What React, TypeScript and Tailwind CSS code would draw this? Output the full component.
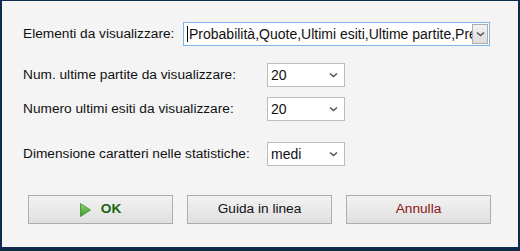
import React from 'react';

const Chevron = () => (
  <svg width="9" height="6" viewBox="0 0 9 6" className="text-[#555]">
    <path d="M1 1.5 L4.5 4.5 L8 1.5" fill="none" stroke="currentColor" strokeWidth="1.6" />
  </svg>
);

const SmallSelect: React.FC<{ value: string }> = ({ value }) => (
  <div className="flex h-[24px] w-[78px] items-center justify-between border border-[#bdbdbd] bg-white pl-[3px] pr-[6px] text-[14px]">
    <span>{value}</span>
    <Chevron />
  </div>
);

const Row: React.FC<{ label: string; children: React.ReactNode }> = ({ label, children }) => (
  <div className="flex items-center">
    <div className="w-[244px]">{label}</div>
    {children}
  </div>
);

export default function App() {
  return (
    <div
      className="h-[251px] w-[520px] overflow-hidden border-x-[2px] border-t-[1px] border-b-[4px] border-[#0c2d4a] bg-[#f4f4f4] text-[13.7px] text-[#111]"
      style={{ fontFamily: '"Liberation Sans", Arial, sans-serif' }}
    >
      <div className="flex flex-col pl-[21px] pt-[21px]">
        <div className="flex items-center">
          <div className="w-[160px]">Elementi da visualizzare:</div>
          <div className="flex h-[24px] w-[307px] items-center border border-[#7eb4ea] bg-white pl-[3px] pr-[1px]">
            <span className="mr-[1px] h-[16px] w-[1px] bg-black" />
            <span className="min-w-0 flex-1 overflow-hidden whitespace-nowrap text-[14px]">
              Probabilità,Quote,Ultimi esiti,Ultime partite,Pre
            </span>
            <div className="flex h-[20px] w-[16px] items-center justify-center border border-[#acacac] bg-gradient-to-b from-[#f2f2f2] to-[#dcdcdc]">
              <Chevron />
            </div>
          </div>
        </div>

        <div className="mt-[17px] flex flex-col gap-[10px]">
          <Row label="Num. ultime partite da visualizzare:">
            <SmallSelect value="20" />
          </Row>
          <Row label="Numero ultimi esiti da visualizzare:">
            <SmallSelect value="20" />
          </Row>
        </div>

        <div className="mt-[21px]">
          <Row label="Dimensione caratteri nelle statistiche:">
            <SmallSelect value="medi" />
          </Row>
        </div>

        <div className="mt-[29px] flex gap-[14px] pl-[5px]">
          <button className="flex h-[29px] w-[145px] items-center justify-center gap-[10px] border border-[#adadad] bg-gradient-to-b from-[#f2f2f2] to-[#e0e0e0] font-bold text-[#17650f]">
            <svg width="11" height="14" viewBox="0 0 11 14">
              <defs>
                <linearGradient id="g" x1="0" y1="0" x2="0" y2="1">
                  <stop offset="0" stopColor="#8fd66f" />
                  <stop offset="1" stopColor="#3a9a2a" />
                </linearGradient>
              </defs>
              <path d="M0.5 0.5 L10.5 7 L0.5 13.5 Z" fill="url(#g)" stroke="#3c8a2c" strokeWidth="0.8" />
            </svg>
            OK
          </button>
          <button className="flex h-[29px] w-[145px] items-center justify-center border border-[#adadad] bg-gradient-to-b from-[#f2f2f2] to-[#e0e0e0]">
            Guida in linea
          </button>
          <button className="flex h-[29px] w-[145px] items-center justify-center border border-[#adadad] bg-gradient-to-b from-[#f2f2f2] to-[#e0e0e0] text-[#8a1414]">
            Annulla
          </button>
        </div>
      </div>
    </div>
  );
}
